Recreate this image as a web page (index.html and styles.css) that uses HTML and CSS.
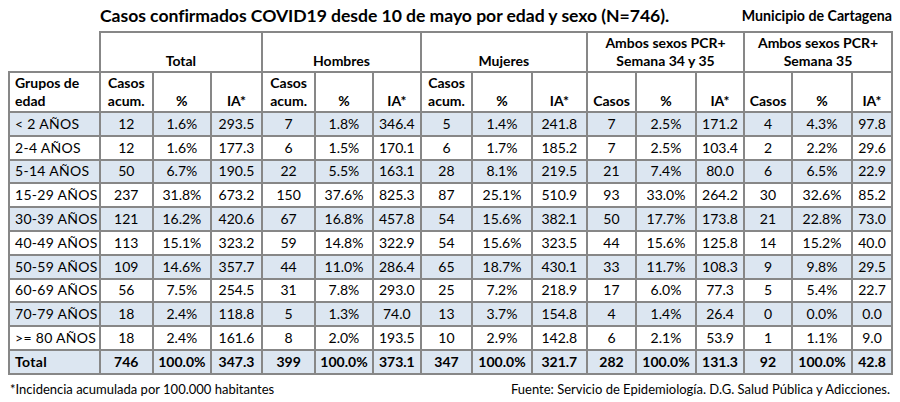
FILE: index.html
```html
<!DOCTYPE html>
<html lang="es">
<head>
<meta charset="utf-8">
<title>Casos confirmados COVID19</title>
<link rel="stylesheet" href="styles.css">
</head>
<body>
<div class="page">
  <div class="top">
    <h1 class="title">Casos confirmados COVID19 desde 10 de mayo por edad y sexo (N=746).</h1>
    <div class="muni">Municipio de Cartagena</div>
  </div>
  <table class="data">
    <colgroup>
      <col class="c-label">
      <col class="c-a"><col class="c-b"><col class="c-c">
      <col class="c-d"><col class="c-e"><col class="c-f">
      <col class="c-g"><col class="c-h"><col class="c-i">
      <col class="c-j"><col class="c-k"><col class="c-l">
      <col class="c-m"><col class="c-n"><col class="c-o">
    </colgroup>
    <thead>
      <tr class="h1">
        <th class="blank"></th>
        <th colspan="3">Total</th>
        <th colspan="3">Hombres</th>
        <th colspan="3">Mujeres</th>
        <th colspan="3">Ambos sexos PCR+<br>Semana 34 y 35</th>
        <th colspan="3">Ambos sexos PCR+<br>Semana 35</th>
      </tr>
      <tr class="h2">
        <th class="lbl">Grupos de<br>edad</th>
        <th>Casos<br>acum.</th><th>%</th><th>IA*</th>
        <th>Casos<br>acum.</th><th>%</th><th>IA*</th>
        <th>Casos<br>acum.</th><th>%</th><th>IA*</th>
        <th>Casos</th><th>%</th><th>IA*</th>
        <th>Casos</th><th>%</th><th>IA*</th>
      </tr>
    </thead>
    <tbody>
      <tr class="alt"><td class="lbl">&lt; 2 AÑOS</td><td>12</td><td>1.6%</td><td>293.5</td><td>7</td><td>1.8%</td><td>346.4</td><td>5</td><td>1.4%</td><td>241.8</td><td>7</td><td>2.5%</td><td>171.2</td><td>4</td><td>4.3%</td><td>97.8</td></tr>
      <tr><td class="lbl">2-4 AÑOS</td><td>12</td><td>1.6%</td><td>177.3</td><td>6</td><td>1.5%</td><td>170.1</td><td>6</td><td>1.7%</td><td>185.2</td><td>7</td><td>2.5%</td><td>103.4</td><td>2</td><td>2.2%</td><td>29.6</td></tr>
      <tr class="alt"><td class="lbl">5-14 AÑOS</td><td>50</td><td>6.7%</td><td>190.5</td><td>22</td><td>5.5%</td><td>163.1</td><td>28</td><td>8.1%</td><td>219.5</td><td>21</td><td>7.4%</td><td>80.0</td><td>6</td><td>6.5%</td><td>22.9</td></tr>
      <tr><td class="lbl">15-29 AÑOS</td><td>237</td><td>31.8%</td><td>673.2</td><td>150</td><td>37.6%</td><td>825.3</td><td>87</td><td>25.1%</td><td>510.9</td><td>93</td><td>33.0%</td><td>264.2</td><td>30</td><td>32.6%</td><td>85.2</td></tr>
      <tr class="alt"><td class="lbl">30-39 AÑOS</td><td>121</td><td>16.2%</td><td>420.6</td><td>67</td><td>16.8%</td><td>457.8</td><td>54</td><td>15.6%</td><td>382.1</td><td>50</td><td>17.7%</td><td>173.8</td><td>21</td><td>22.8%</td><td>73.0</td></tr>
      <tr><td class="lbl">40-49 AÑOS</td><td>113</td><td>15.1%</td><td>323.2</td><td>59</td><td>14.8%</td><td>322.9</td><td>54</td><td>15.6%</td><td>323.5</td><td>44</td><td>15.6%</td><td>125.8</td><td>14</td><td>15.2%</td><td>40.0</td></tr>
      <tr class="alt"><td class="lbl">50-59 AÑOS</td><td>109</td><td>14.6%</td><td>357.7</td><td>44</td><td>11.0%</td><td>286.4</td><td>65</td><td>18.7%</td><td>430.1</td><td>33</td><td>11.7%</td><td>108.3</td><td>9</td><td>9.8%</td><td>29.5</td></tr>
      <tr><td class="lbl">60-69 AÑOS</td><td>56</td><td>7.5%</td><td>254.5</td><td>31</td><td>7.8%</td><td>293.0</td><td>25</td><td>7.2%</td><td>218.9</td><td>17</td><td>6.0%</td><td>77.3</td><td>5</td><td>5.4%</td><td>22.7</td></tr>
      <tr class="alt"><td class="lbl">70-79 AÑOS</td><td>18</td><td>2.4%</td><td>118.8</td><td>5</td><td>1.3%</td><td>74.0</td><td>13</td><td>3.7%</td><td>154.8</td><td>4</td><td>1.4%</td><td>26.4</td><td>0</td><td>0.0%</td><td>0.0</td></tr>
      <tr><td class="lbl">&gt;= 80 AÑOS</td><td>18</td><td>2.4%</td><td>161.6</td><td>8</td><td>2.0%</td><td>193.5</td><td>10</td><td>2.9%</td><td>142.8</td><td>6</td><td>2.1%</td><td>53.9</td><td>1</td><td>1.1%</td><td>9.0</td></tr>
      <tr class="alt total"><td class="lbl">Total</td><td>746</td><td>100.0%</td><td>347.3</td><td>399</td><td>100.0%</td><td>373.1</td><td>347</td><td>100.0%</td><td>321.7</td><td>282</td><td>100.0%</td><td>131.3</td><td>92</td><td>100.0%</td><td>42.8</td></tr>
    </tbody>
  </table>
  <div class="foot">
    <span class="note">*Incidencia acumulada por 100.000 habitantes</span>
    <span class="src">Fuente: Servicio de Epidemiología. D.G. Salud Pública y Adicciones.</span>
  </div>
</div>
</body>
</html>
```

FILE: styles.css
```css
html, body {
  margin: 0;
  padding: 0;
  background: #ffffff;
}
body {
  font-family: Lato, "Open Sans", "Liberation Sans", sans-serif;
  color: #000;
}
.page {
  width: 900px;
  height: 402px;
  overflow: hidden;
}
.top {
  display: flex;
  align-items: center;
  justify-content: space-between;
  height: 31px;
  padding: 0 8px 0 100px;
}
.title {
  margin: 0;
  font-size: 17.6px;
  font-weight: 700;
  letter-spacing: -0.05px;
}
.muni {
  font-size: 14.2px;
  font-weight: 700;
}
.data {
  border-collapse: collapse;
  table-layout: fixed;
  width: 885px;
  margin-left: 8px;
  font-size: 14px;
}
.c-label { width: 90.5px; }
.c-a { width: 53.5px; }
.c-b { width: 57.7px; }
.c-c { width: 51.6px; }
.c-d { width: 52.7px; }
.c-e { width: 58px; }
.c-f { width: 47.7px; }
.c-g { width: 51.6px; }
.c-h { width: 59.4px; }
.c-i { width: 55.3px; }
.c-j { width: 49px; }
.c-k { width: 60px; }
.c-l { width: 48px; }
.c-m { width: 48px; }
.c-n { width: 60px; }
.c-o { width: 40px; }
.data th, .data td {
  border: 2px solid #878787;
  padding: 0 2px;
  text-align: center;
  white-space: nowrap;
}
.data th {
  font-weight: 700;
  vertical-align: bottom;
  line-height: 18px;
  padding-bottom: 1px;
}
.h1 th, .h2 th {
  height: 37px;
}
.data th.blank {
  border-top: none;
  border-left: none;
}
.data .lbl {
  text-align: left;
  padding-left: 5px;
}
.data td.lbl {
  letter-spacing: 0.3px;
}
.data td {
  height: 21.8px;
  line-height: 18px;
  vertical-align: middle;
}
.alt td {
  background: #dce6f1;
}
.total td {
  font-weight: 700;
  letter-spacing: 0;
}
.foot {
  display: flex;
  justify-content: space-between;
  padding: 6px 10px 0 10px;
  font-size: 13px;
}
```
